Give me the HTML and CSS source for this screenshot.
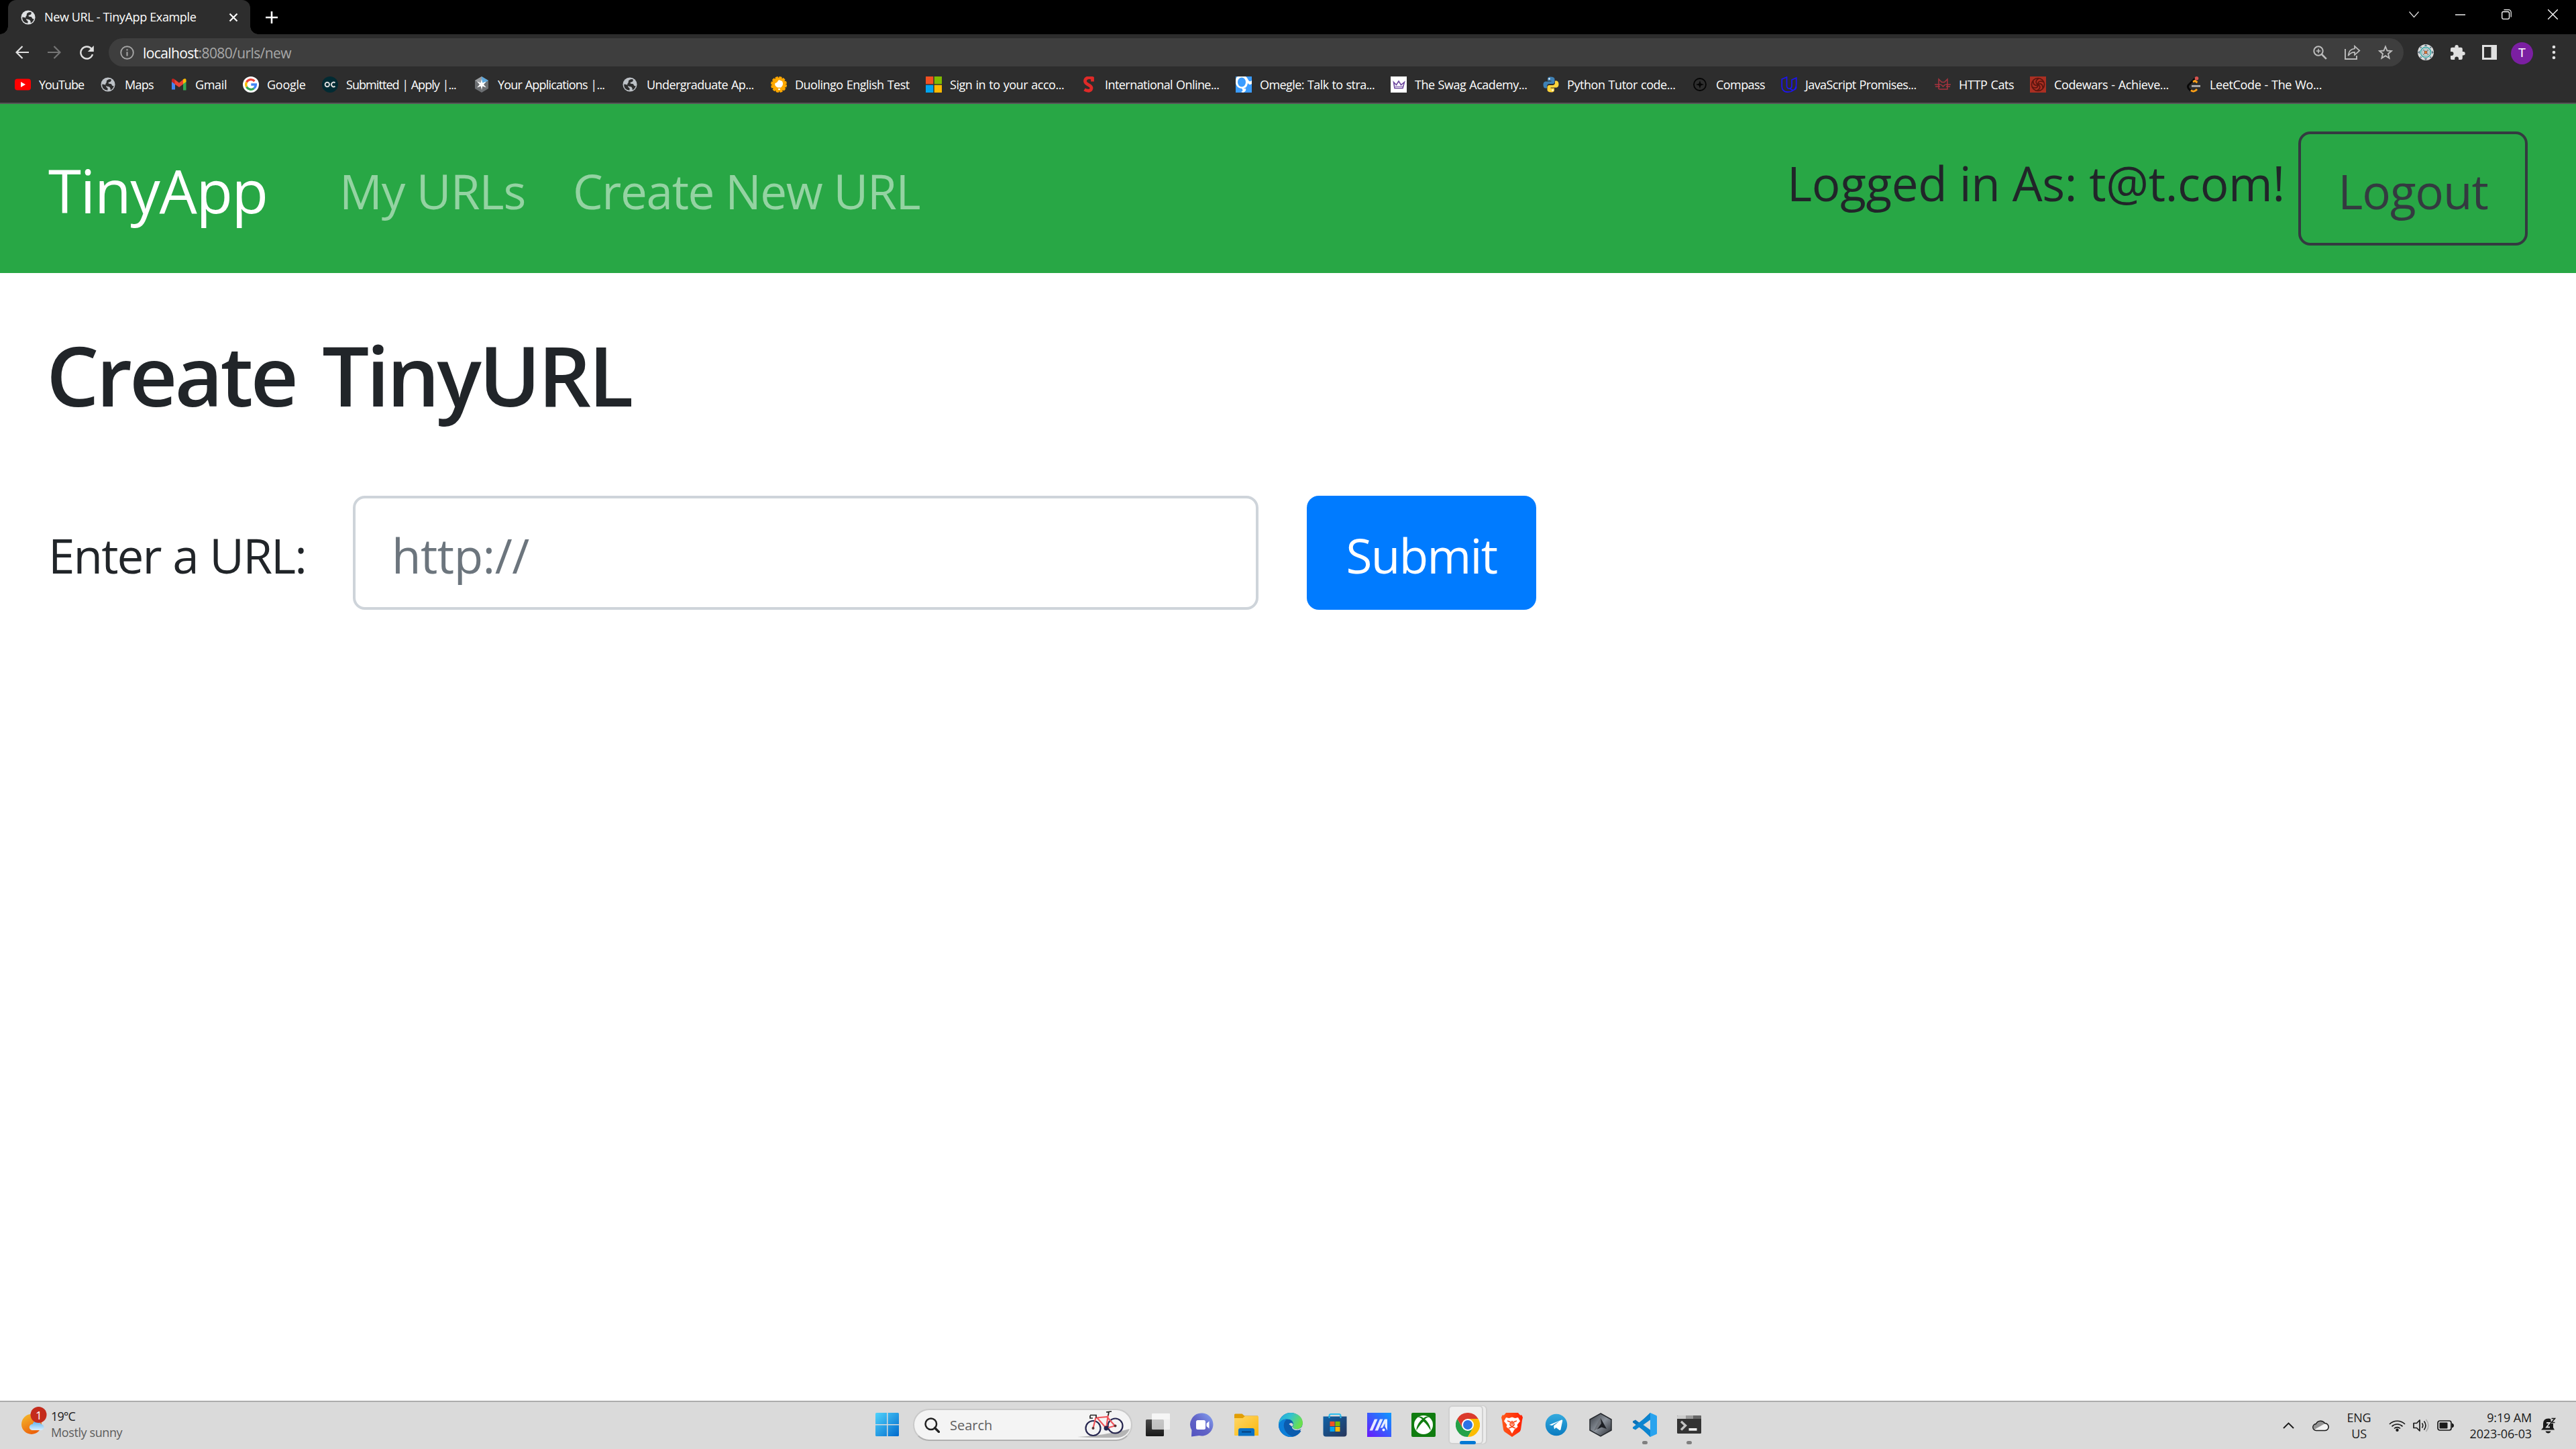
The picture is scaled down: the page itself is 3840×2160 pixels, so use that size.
FILE: index.html
```html
<!DOCTYPE html>
<html lang="en">
<head>
<meta charset="utf-8">
<title>New URL - TinyApp Example</title>
<link rel="stylesheet" href="styles.css">
</head>
<body>
<svg class="defs" width="0" height="0">
  <defs>
    <symbol id="globe" viewBox="0 0 24 24"><circle cx="12" cy="12" r="11.5" fill="currentColor"/><path d="M2.500 11.500c3 .5 4.500.5 6 1.800 1 1.200 0 2.700 1.500 3.700 1.500.8 2 1.500 1.200 4.500C5 21 1.800 16.500 2.500 11.500zM10 5.500c2-1.500 4-2.500 6.500-2 1.500 1 .5 3-.5 3.800-1.500 1-3.500.7-3.500 2.200.2 1.300 2.500 1 4 1.500 2.200.8 1.500 3.500 4 3.500l1-.4c-.5 3-3 6-5.500 6.900.5-2.500-.5-3.500-1.500-5-1-1.300-4.500-.5-6-2.200C7 12 8 10.500 9 9.500c1-1 .3-2.500 1-4z" fill="#2d2d2d"/></symbol>
    <linearGradient id="gStart" x1="0" y1="0" x2="1" y2="1"><stop offset="0" stop-color="#50d3fc"/><stop offset="1" stop-color="#0069cc"/></linearGradient>
    <linearGradient id="gSun" x1="0" y1="0" x2=".5" y2="1"><stop offset="0" stop-color="#f5bd2c"/><stop offset="1" stop-color="#ec620b"/></linearGradient>
    <linearGradient id="gCloud" x1="0" y1="0" x2="0" y2="1"><stop offset="0" stop-color="#58b0ee"/><stop offset="1" stop-color="#d9efff"/></linearGradient>
    <linearGradient id="gDark" x1="0" y1="0" x2="0" y2="1"><stop offset="0" stop-color="#4a4a4a"/><stop offset="1" stop-color="#191919"/></linearGradient>
    <linearGradient id="gChat" x1="0" y1="1" x2="1" y2="0"><stop offset="0" stop-color="#5252c0"/><stop offset=".5" stop-color="#6264c7"/><stop offset="1" stop-color="#87a6f5"/></linearGradient>
    <linearGradient id="gFolder" x1="0" y1="0" x2="1" y2="1"><stop offset="0" stop-color="#ffd766"/><stop offset="1" stop-color="#fbb70e"/></linearGradient>
    <linearGradient id="gEdge" x1="0" y1="0" x2="1" y2=".4"><stop offset="0" stop-color="#1ea5e0"/><stop offset=".5" stop-color="#33c2cf"/><stop offset="1" stop-color="#6bdf4e"/></linearGradient>
    <linearGradient id="gStore" x1="0" y1="0" x2="1" y2="1"><stop offset="0" stop-color="#0f62a8"/><stop offset="1" stop-color="#27355a"/></linearGradient>
    <linearGradient id="gArmoury" x1="0" y1="1" x2="1" y2="0"><stop offset="0" stop-color="#6a18fb"/><stop offset="1" stop-color="#0b9bff"/></linearGradient>
    <linearGradient id="gBrave" x1="0" y1="0" x2="1" y2="0"><stop offset="0" stop-color="#ff5a1c"/><stop offset="1" stop-color="#ff2104"/></linearGradient>
    <linearGradient id="gTg" x1="0" y1="0" x2="0" y2="1"><stop offset="0" stop-color="#34aade"/><stop offset="1" stop-color="#0a7bc0"/></linearGradient>
    <linearGradient id="gHex" x1="0" y1="0" x2="1" y2="1"><stop offset="0" stop-color="#34383f"/><stop offset=".5" stop-color="#8b929b"/><stop offset="1" stop-color="#23262c"/></linearGradient>
  </defs>
</svg>

<header class="chrome">
  <div class="tabstrip">
    <div class="tab">
      <svg class="favicon light" width="22" height="22"><use href="#globe"/></svg>
      <span class="tab-title">New URL - TinyApp Example</span>
      <svg class="tab-close" width="14" height="14" viewBox="0 0 14 14"><path d="M1.500 1.500l11 11M12.500 1.500l-11 11" stroke="#fff" stroke-width="2.200"/></svg>
    </div>
    <svg class="tab-new" width="18" height="18" viewBox="0 0 18 18"><path d="M9 0v18M0 9h18" stroke="#fff" stroke-width="2.600"/></svg>
    <div class="window-buttons">
      <svg width="15" height="10" viewBox="0 0 15 10"><path d="M.5.5l7 8 7-8" fill="none" stroke="#ddd" stroke-width="1.200"/></svg>
      <svg width="15" height="10" viewBox="0 0 15 10"><path d="M0 5h15" stroke="#fff" stroke-width="1.400"/></svg>
      <svg width="15" height="15" viewBox="0 0 15 15"><rect x=".7" y="3.500" width="10.800" height="10.800" rx="2" fill="none" stroke="#fff" stroke-width="1.300"/><path d="M3.500.7h7a3.700 3.700 0 0 1 3.700 3.700v7.100" fill="none" stroke="#fff" stroke-width="1.200"/></svg>
      <svg width="15" height="15" viewBox="0 0 15 15"><path d="M0 0l15 15M15 0L0 15" stroke="#fff" stroke-width="1.300"/></svg>
    </div>
  </div>

  <div class="toolbar">
    <svg width="20" height="20" viewBox="0 0 20 20"><path d="M20 10H2M10.500 1L1.500 10l9 9" fill="none" stroke="#e0e0e0" stroke-width="2.200"/></svg>
    <svg class="off" width="20" height="20" viewBox="0 0 20 20"><path d="M0 10h18M9.500 1l9 9-9 9" fill="none" stroke="#757575" stroke-width="2.200"/></svg>
    <svg width="21" height="21" viewBox="0 0 21 21"><path d="M17.500 5A9 9 0 1 0 19 13" fill="none" stroke="#e0e0e0" stroke-width="2.400"/><path d="M20.800 0v9h-9z" fill="#e0e0e0"/></svg>
    <div class="omnibox">
      <svg width="21" height="21" viewBox="0 0 21 21"><circle cx="10.500" cy="10.500" r="9.300" fill="none" stroke="#a6a6a6" stroke-width="1.900"/><path d="M10.500 9.200v6.300M10.500 5.200v2.200" stroke="#a6a6a6" stroke-width="2.100"/></svg>
      <span class="url"><b>localhost</b>:8080/urls/new</span>
      <div class="omni-actions">
        <svg width="21" height="21" viewBox="0 0 21 21"><circle cx="8" cy="8" r="6.700" fill="none" stroke="#bdbdbd" stroke-width="2"/><path d="M13 13l6.800 6.800" stroke="#bdbdbd" stroke-width="2.600"/><path d="M8 4.800v6.400M4.800 8h6.400" stroke="#bdbdbd" stroke-width="1.600"/></svg>
        <svg width="24" height="22" viewBox="0 0 24 22"><path d="M1 6v15h17v-5" fill="none" stroke="#bdbdbd" stroke-width="1.900"/><path d="M5.500 16C6 10 9.500 6 15 5.500V1.800l7.300 6.700-7.300 6.300v-4C11 10.800 8 12 5.500 16z" fill="none" stroke="#bdbdbd" stroke-width="1.700"/></svg>
        <svg width="22" height="22" viewBox="0 0 22 22"><path d="M11 2.500l2.500 6 6.500.5-5 4.200 1.600 6.400L11 16.100l-5.600 3.500L7 13.200 2 9l6.500-.5z" fill="none" stroke="#bdbdbd" stroke-width="1.900"/></svg>
      </div>
    </div>
    <div class="extensions">
      <svg width="24" height="24" viewBox="0 0 24 24"><circle cx="12" cy="12" r="12" fill="#dcdcdc"/><path d="M12 0l2.500 3h-5zM12 24l2.500-3h-5zM0 12l3-2.500v5zM24 12l-3-2.500v5zM3.500 3.500l3 .6-2.400 2.400zM20.500 3.500l-3 .6 2.400 2.400zM3.500 20.500l3-.6-2.400-2.400zM20.500 20.500l-3-.6 2.400-2.400z" fill="#5b7280"/><circle cx="12" cy="12" r="7.600" fill="none" stroke="#38a9a8" stroke-width="1.500"/><circle cx="12" cy="12" r="5.200" fill="none" stroke="#8aa" stroke-width="1"/><path d="M8 8l8 8M16 8l-8 8" stroke="#556"/><rect x="10" y="10" width="4" height="4" fill="#f0762c" stroke="#555" stroke-width=".8"/></svg>
      <svg width="22" height="22" viewBox="0 0 22 22"><path d="M19 10h-1.200V6a2.200 2.200 0 0 0-2.200-2.200H11.800V2.700a2.700 2.700 0 0 0-5.400 0v1.100H2.200A2.200 2.200 0 0 0 0 6v4h1.500a3 3 0 0 1 0 6H0v4a2 2 0 0 0 2.200 2h4v-1.600a2.900 2.900 0 0 1 5.800 0V22h3.600a2.200 2.200 0 0 0 2.200-2.200v-4.400H19A2.700 2.700 0 0 0 19 10z" fill="#e0e0e0"/></svg>
      <svg width="22" height="22" viewBox="0 0 22 22"><rect width="22" height="22" fill="#e0e0e0"/><rect x="3" y="3" width="10.500" height="16" fill="#2d2d2d"/></svg>
      <span class="avatar">T</span>
      <svg width="6" height="22" viewBox="0 0 6 22"><circle cx="3" cy="3" r="2.300" fill="#e0e0e0"/><circle cx="3" cy="11" r="2.300" fill="#e0e0e0"/><circle cx="3" cy="19" r="2.300" fill="#e0e0e0"/></svg>
    </div>
  </div>

  <nav class="bookmarks">
    <a class="bm"><svg width="24" height="24" viewBox="0 0 24 24"><rect y="3.500" width="24" height="17" rx="4" fill="#f00"/><path d="M9 8l7 4-7 4z" fill="#fff"/></svg><span>YouTube</span></a>
    <a class="bm"><svg class="favicon" width="24" height="24" viewBox="0 0 24 24"><use href="#globe" x="0" y="1" width="22" height="22"/></svg><span>Maps</span></a>
    <a class="bm"><svg width="24" height="24" viewBox="0 0 24 24"><path d="M1 6v13.500h5V11z" fill="#4285f4"/><path d="M18 11v9.500h4.500V6z" fill="#34a853"/><path d="M1 5c0-2 2.500-2.500 4-1l1 1v6.500L1 8z" fill="#c5221f"/><path d="M22.500 5c0-2-2.500-2.500-4-1l-1 1v6.500l5-3.500z" fill="#fbbc04"/><path d="M5.500 4.500L12 9.500l6-5v7l-6 4.500-6.500-4.500z" fill="#ea4335"/></svg><span>Gmail</span></a>
    <a class="bm"><svg width="24" height="24" viewBox="0 0 24 24"><circle cx="12" cy="12" r="12" fill="#fff"/><g fill="none" stroke-width="3.300"><path d="M17.500 7A7.400 7.400 0 0 0 5.600 8.500" stroke="#ea4335"/><path d="M5.600 8.500a7.400 7.400 0 0 0 0 7" stroke="#fbbc04"/><path d="M5.600 15.500a7.400 7.400 0 0 0 11 2.200" stroke="#34a853"/><path d="M16.600 17.700A7.400 7.400 0 0 0 19.400 12H12.300" stroke="#4285f4"/></g></svg><span>Google</span></a>
    <a class="bm"><svg width="24" height="24" viewBox="0 0 24 24"><circle cx="12" cy="12" r="12" fill="#022b33"/><circle cx="7.800" cy="12" r="3.200" fill="none" stroke="#ddd" stroke-width="1.900"/><path d="M19.500 9.500a3.300 3.300 0 1 0 0 5" fill="none" stroke="#ddd" stroke-width="1.900"/></svg><span>Submitted | Apply |...</span></a>
    <a class="bm"><svg width="24" height="24" viewBox="0 0 24 24"><path d="M12 0l10 6v12L12 24 2 18V6z" fill="#6c6f72"/><path d="M12 0l10 6-10 6z" fill="#5fa9dd"/><path d="M12 0v12L2 6z" fill="#9a9da0"/><path d="M12 4l1.300 5.500L19 7.500 15 12l4 4.500-5.700-2L12 20l-1.300-5.500-5.700 2L9 12 5 7.500l5.700 2z" fill="#fff"/></svg><span>Your Applications |...</span></a>
    <a class="bm"><svg class="favicon" width="24" height="24" viewBox="0 0 24 24"><use href="#globe" x="0" y="1" width="22" height="22"/></svg><span>Undergraduate Ap...</span></a>
    <a class="bm"><svg width="24" height="24" viewBox="0 0 24 24"><circle cx="12" cy="12" r="10.500" fill="#ffa800" stroke="#ffa800" stroke-width="3" stroke-dasharray="4 1.500"/><path d="M12 5l5 2c2 4 1 7-2 9.500h-4.500C7 15 5.500 13 6.500 10L9 9zM11 18h3v2h-3z" fill="#fff"/></svg><span>Duolingo English Test</span></a>
    <a class="bm"><svg width="24" height="24" viewBox="0 0 24 24"><path d="M0 0h11.300v11.300H0z" fill="#f25022"/><path d="M12.700 0H24v11.300H12.700z" fill="#7fba00"/><path d="M0 12.700h11.300V24H0z" fill="#00a4ef"/><path d="M12.700 12.700H24V24H12.700z" fill="#ffb900"/></svg><span>Sign in to your acco...</span></a>
    <a class="bm"><svg width="24" height="24" viewBox="0 0 24 24"><path d="M17.500 7.500V2.500C12 0 6.500 2.500 6.500 7c0 5.500 9.500 5 9.500 10 0 4.500-5 5.500-10.500 2.500" fill="none" stroke="#df2a28" stroke-width="4.800"/></svg><span>International Online...</span></a>
    <a class="bm"><svg width="24" height="24" viewBox="0 0 24 24"><path d="M0 0h24v24H0z" fill="#3b9cff"/><path d="M3 0h12c4 3 4 10 9 6v5c-3 2-4 1-6-1-1 6-4 8-8 8-5 0-9-3-10-8V6c0-3 1-5 3-6z" fill="#fff"/><ellipse cx="9" cy="8.500" rx="6" ry="7" fill="#3b9cff"/><path d="M9 18h6c1 3-1 5-4 6l-3-1c3-1 3-3 1-5z" fill="#fff"/></svg><span>Omegle: Talk to stra...</span></a>
    <a class="bm"><svg width="24" height="24" viewBox="0 0 24 24"><path d="M0 0h24v24H0z" fill="#fff"/><path d="M4.500 8.500l4 4L12 7l3.500 5.500 5-4-2.500 9H6z" fill="none" stroke="#6d479f" stroke-width="1.600"/><path d="M7 15h11" stroke="#9d7fc0" stroke-width="1.500"/></svg><span>The Swag Academy...</span></a>
    <a class="bm"><svg width="24" height="24" viewBox="0 0 24 24"><path d="M11.800.5C7 .5 7 2.500 7 4v2.500h5.500v1H4.300C1.500 7.500.5 10 .5 12.500c0 3 1.200 5 3.500 5h2v-3c0-2 1.500-3.500 3.500-3.500h5c1.700 0 3-1.300 3-3V4c0-2-2-3.500-5.700-3.500z" fill="#3f81b5"/><path d="M12.200 23.500c4.800 0 4.800-2 4.800-3.500v-2.500h-5.500v-1h8.200c2.800 0 3.800-2.500 3.800-5s-1.200-5-3.500-5h-2v3c0 2-1.500 3.500-3.500 3.500h-5c-1.700 0-3 1.300-3 3V20c0 2 2 3.500 5.700 3.500z" fill="#ffd43b"/><circle cx="9.500" cy="3.500" r="1.200" fill="#fff"/><circle cx="14.500" cy="20.500" r="1.200" fill="#fff"/></svg><span>Python Tutor code...</span></a>
    <a class="bm"><svg width="24" height="24" viewBox="0 0 24 24"><circle cx="12" cy="12" r="9" fill="none" stroke="#050505" stroke-width="1.800"/><path d="M12 6l1.500 4.500L18 12l-4.500 1.500L12 18l-1.500-4.500L6 12l4.500-1.500z" fill="#050505"/></svg><span>Compass</span></a>
    <a class="bm"><svg width="24" height="24" viewBox="0 0 24 24"><path d="M8.500 1L1.200 4v11c0 5 3.500 8.200 8 8.200 8 0 13.500-4 13.500-12V2L16 5v9c0 5-7.500 6-7.500 0zM14 19c5 3 8.700 0 8.700-4" fill="none" stroke="#1d14f5" stroke-width="1.700"/></svg><span>JavaScript Promises...</span></a>
    <a class="bm"><svg width="24" height="24" viewBox="0 0 24 24"><path d="M6 19V4l4.500 4.500h4L19 4v15H6.500M0 12h9M16 12h8M1 15h7M17 15h6M9.500 12l3 3 3-3" fill="none" stroke="#a8333f" stroke-width="1.500"/></svg><span>HTTP Cats</span></a>
    <a class="bm"><svg width="24" height="24" viewBox="0 0 24 24"><path d="M0 0h24v24H0z" fill="#ab2f22"/><g fill="none" stroke="#5c160f" stroke-width="1.700"><circle cx="12" cy="12" r="9.500"/><path id="cwArm" d="M12 12c-4-2-4-6 1-9"/><use href="#cwArm" transform="rotate(60 12 12)"/><use href="#cwArm" transform="rotate(120 12 12)"/><use href="#cwArm" transform="rotate(180 12 12)"/><use href="#cwArm" transform="rotate(240 12 12)"/><use href="#cwArm" transform="rotate(300 12 12)"/></g></svg><span>Codewars - Achieve...</span></a>
    <a class="bm"><svg width="24" height="24" viewBox="0 0 24 24"><path d="M14 3L4.500 12.500c-1.500 1.500-1 4 0 5.500L8 21.500" fill="none" stroke="#070707" stroke-width="2.800"/><path d="M11 8l3-1.500L17.500 9M8 20.500c3 3 6.500 1.500 9-1.500" fill="none" stroke="#ffa116" stroke-width="2.800"/><path d="M9 14.300h13" stroke="#b3b3b3" stroke-width="2.800"/><circle cx="16.500" cy="2.800" r="2.800" fill="#d9534f"/></svg><span>LeetCode - The Wo...</span></a>
  </nav>
</header>

<main class="page">
  <nav class="navbar">
    <a class="brand">TinyApp</a>
    <a class="nav-link nav-urls">My URLs</a>
    <a class="nav-link nav-create">Create New URL</a>
    <form class="session">
      <span class="who">Logged in As: t@t.com!</span>
      <button class="btn btn-outline" type="button">Logout</button>
    </form>
  </nav>
  <h3 class="title">Create TinyURL</h3>
  <form class="create-form">
    <label class="field-label" for="long-url">Enter a URL:</label>
    <input class="field" id="long-url" type="text" placeholder="http://">
    <button class="btn btn-primary" type="button">Submit</button>
  </form>
</main>

<footer class="taskbar">
  <div class="weather">
    <svg width="40" height="44" viewBox="0 0 40 44"><circle cx="15" cy="26" r="15" fill="url(#gSun)"/><path d="M16 35a4.500 4.500 0 0 1 .5-9 6.500 6.500 0 0 1 12.500 0 4.500 4.500 0 0 1 0 9z" fill="url(#gCloud)"/><circle cx="25.500" cy="12" r="12" fill="#c42b1c"/></svg>
    <span class="badge">1</span>
    <div class="weather-text"><span class="temp">19°C</span><span class="sky">Mostly sunny</span></div>
  </div>

  <div class="apps">
    <span class="app"><svg width="36" height="36" viewBox="0 0 36 36"><path d="M1.500 0H17v17H0V1.500A1.500 1.500 0 0 1 1.500 0zM18.500 0h15A1.500 1.500 0 0 1 35 1.500V17H18.500zM0 18.500h17V35H1.500A1.500 1.500 0 0 1 0 33.500zM18.500 18.500H35v15a1.500 1.500 0 0 1-1.500 1.500h-15z" fill="url(#gStart)"/></svg></span>
    <div class="search">
      <svg width="23" height="23" viewBox="0 0 23 23"><circle cx="9.800" cy="9.800" r="8.300" fill="none" stroke="#222" stroke-width="2.500"/><path d="M15.500 15.500l6 6" stroke="#222" stroke-width="3.200" stroke-linecap="round"/></svg>
      <span>Search</span>
      <svg class="bike" width="80" height="44" viewBox="0 0 80 44"><path d="M1 40c30-2 50-5 78-12-3 8-9 12-17 13-20 .5-40 .5-61-1z" fill="#b4b4b4"/><g fill="none" stroke="#26264f" stroke-width="2.200"><circle cx="24.500" cy="27" r="11"/><circle cx="57.500" cy="23.500" r="11"/></g><path d="M24.500 27l4-16M28.500 11.500l18-1.500L44 27l-14-16M47 7l-1 4 11 12.500L44 27" fill="none" stroke="#f0565c" stroke-width="2.200"/><path d="M20 8v4h4M20 7.500h9v4M44 3l8-1M48 2.500L47 8" fill="none" stroke="#222" stroke-width="1.700"/><circle cx="44" cy="27" r="3.400" fill="#26264f"/><circle cx="24.500" cy="27" r="2" fill="#5a3434"/><circle cx="57.500" cy="23.500" r="2" fill="#5a3434"/></svg>
    </div>
    <span class="app"><svg width="36" height="36" viewBox="0 0 36 36"><rect y="10" width="27" height="25" rx="1.500" fill="url(#gDark)"/><rect x="9" y="1" width="27" height="24" rx="1.500" fill="#f6f6f6" fill-opacity=".72"/><path d="M10 1h25a1 1 0 0 1 1 1v8H9V2a1 1 0 0 1 1-1z" fill="#fafafa" fill-opacity=".7"/></svg></span>
    <span class="app"><svg width="36" height="36" viewBox="0 0 36 36"><path d="M18.500.5a17 17 0 1 1-5 33.500L2 35.500 2.500 26A17 17 0 0 1 18.500.5z" fill="url(#gChat)"/><rect x="9" y="11" width="14" height="14" rx="2.500" fill="#fff"/><path d="M24.500 16l4-3.500v11l-4-3.500z" fill="#fff"/></svg></span>
    <span class="app"><svg width="36" height="36" viewBox="0 0 36 36"><path d="M1.500 1.500h10L15 4.500h20v10H0V3a1.500 1.500 0 0 1 1.500-1.500z" fill="#e19e06"/><path d="M0 8h12.500L16 5h19a1 1 0 0 1 1 1v28H1a1 1 0 0 1-1-1z" fill="url(#gFolder)"/><path d="M6 34.500V26a3 3 0 0 1 3-3h18a3 3 0 0 1 3 3v8.500z" fill="#0a70c4"/><path d="M11 28.500h14" stroke="#053f7c" stroke-width="2"/></svg></span>
    <span class="app"><svg width="36" height="36" viewBox="0 0 36 36"><circle cx="18" cy="18" r="18" fill="#0b5cae"/><path d="M0 18A18 18 0 0 1 18 0c10 0 18 6.500 18 15 0 6-4.500 9.500-9.500 9.500-4 0-6-1.500-6-3 0-1 1.500-1.500 1.500-4.500 0-4-3.500-7.500-9-7.500C7 9.500 2 12 0 18z" fill="url(#gEdge)"/><path d="M0 18c2-6 7-8.500 12.500-8.500C9 12 7 16 8 21.500 9.500 30 17 35 22 35.500A18 18 0 0 1 0 18z" fill="#0c7fd9"/><path d="M15.500 17c1.500-2.500 5-2.500 6 0 .3 2-1.500 3-1.500 4.500 0 2.500 3.500 4.500 7 4.500 3 0 5-1 7-2l2.500-1.500V15c0 6-4.500 9.500-9.500 9.500-4 0-6-1.500-6-3z" fill="#dadada"/><path d="M36.500 15v14l-4.500-2.500 2-3z" fill="#dadada"/></svg></span>
    <span class="app"><svg width="36" height="36" viewBox="0 0 36 36"><path d="M9.500 7V4.500A2.500 2.500 0 0 1 12 2h12a2.500 2.500 0 0 1 2.500 2.500V7" fill="none" stroke="#2bbdee" stroke-width="2"/><path d="M.5 5.500h35v26a4 4 0 0 1-4 4h-27a4 4 0 0 1-4-4z" fill="url(#gStore)"/><path d="M10.500 13h7v7h-7z" fill="#f25022"/><path d="M18.500 13h7v7h-7z" fill="#7fba00"/><path d="M10.500 21h7v7h-7z" fill="#00a4ef"/><path d="M18.500 21h7v7h-7z" fill="#ffb900"/><path d="M9.500 5.500v2.500M26.500 5.500v2.500" stroke="#2bbdee" stroke-width="2"/></svg></span>
    <span class="app"><svg width="36" height="36" viewBox="0 0 36 36"><path d="M0 0h36v36H0z" fill="url(#gArmoury)"/><path d="M3.500 26.500L11 9.500h4.500L8 26.500zM11.500 26.500L19 9.500h4.500L16 26.500zM19.500 22.500L26 9.500h4v17l-3.500-6v-5l-3.500 7z" fill="#fff" fill-opacity=".88"/><circle cx="24.500" cy="25.500" r="2" fill="#fff"/></svg></span>
    <span class="app"><svg width="36" height="36" viewBox="0 0 36 36"><rect width="36" height="36" rx="2" fill="#107c10"/><circle cx="18" cy="18" r="14" fill="#fff"/><path d="M9 6.500c3-2 6.500-.5 9 1.500 2.500-2 6-3.500 9-1.500-2.500-.5-5 1-7 3 5 4.500 9 11 8.500 17C25.500 21 21.500 16 18 13c-3.500 3-7.500 8-10.500 13.500C7 20.500 11 14 16 9.500c-2-2-4.500-3.500-7-3z" fill="#107c10"/></svg></span>
    <span class="app active"><svg width="36" height="36" viewBox="0 0 36 36"><path d="M2.400 9A18 18 0 0 0 18 36l8-13.500H10.200z" fill="#24a148"/><path d="M33.600 9A18 18 0 0 1 18 36l7.800-13.500L18 9z" fill="#fbbc04"/><path d="M2.400 9l7.800 13.500L18 9h15.600A18 18 0 0 0 2.400 9z" fill="#db3a2c"/><circle cx="18" cy="18" r="9" fill="#fff"/><circle cx="18" cy="18" r="7" fill="#2a72e5"/></svg></span>
    <span class="app"><svg width="36" height="36" viewBox="0 0 36 36"><path d="M9 0h18l3 3.500 2.500 0L34 7l-1 4-2 14q-.5 2-2 3.500L18 36 7 28.500Q5.500 27 5 25L3 11 2 7l1.500-3.500L6 3.500z" fill="url(#gBrave)"/><path d="M9 7l4.500 1L18 6.500 22.500 8 27 7l3 5.500-4.500 5.500 1 3-5 4-3.500 6-3.500-6-5-4 1-3L6 12.500z" fill="#fff"/><path d="M11 12l5 2-1 4 3 3 3-3-1-4 5-2M13 23l5-2 5 2M18 12v6" fill="none" stroke="#fb4a1b" stroke-width="1.800"/></svg></span>
    <span class="app"><svg width="36" height="36" viewBox="0 0 36 36"><circle cx="18" cy="18" r="16.200" fill="url(#gTg)"/><path d="M7.500 18L26 10.500q1.500-.5 1.200 1.500L24.500 25q-.5 1.500-2 .7l-5-3.700-2.500 2.500-1-5 9-7.500-11.500 7z" fill="#fff"/></svg></span>
    <span class="app"><svg width="36" height="36" viewBox="0 0 36 36"><path d="M18 1l16 9v16L18 35 2 26V10z" fill="url(#gHex)" stroke="#25282d" stroke-width="1.500"/><path d="M18 8l9 16-7.500-2.500L8 27z" fill="#1c1f24"/><path d="M18 8L8 27l4-1 7-10z" fill="#c2c8cf" fill-opacity=".5"/></svg></span>
    <span class="app running"><svg width="36" height="36" viewBox="0 0 36 36"><path d="M26 0L10 15 4 10.500 0 12.500v2L21 30l5 6z" fill="#0a72b8"/><path d="M26 36L10 21l-6 4.500L0 23.500v-2L22 5l4-5z" fill="#0b84cf"/><path d="M26 0l9 4q1 .5 1 1.500v25q0 1-1 1.500l-9 4z" fill="#29a3ee"/><path d="M26 10.500L15.500 18 26 25.500z" fill="#dadada"/></svg></span>
    <span class="app running"><svg width="36" height="36" viewBox="0 0 36 36"><rect y="4" width="36" height="27" rx="1.500" fill="#333"/><path d="M0 9V5.500A1.500 1.500 0 0 1 1.500 4H13v5z" fill="#ccc"/><path d="M13 4h11v5H13z" fill="#999"/><path d="M24 4h10.500A1.500 1.500 0 0 1 36 5.500V9H24z" fill="#666"/><path d="M6 13l6.500 6L6 25.500" fill="none" stroke="#c4c4c4" stroke-width="3.400"/><rect x="17.500" y="23" width="12" height="3.700" fill="#f0f0f0"/></svg></span>
  </div>

  <div class="tray">
    <svg width="17" height="10" viewBox="0 0 17 10"><path d="M1 9l7.500-7.500L16 9" fill="none" stroke="#1a1a1a" stroke-width="1.900"/></svg>
    <svg class="t-cloud" width="25" height="18" viewBox="0 0 25 18"><path d="M6 16.500A5 5 0 0 1 5.500 6.500 7.500 7.500 0 0 1 18.500 5.500a5.500 5.500 0 0 1 .5 11z" fill="#949494"/><path d="M3 15l15-8.500c6 0 7.500 8.500.5 10H6z" fill="#f4f4f4"/><path d="M6 16.500A5 5 0 0 1 5.500 6.500 7.500 7.500 0 0 1 18.500 5.500a5.500 5.500 0 0 1 .5 11z" fill="none" stroke="#1a1a1a" stroke-width="1.400"/></svg>
    <div class="lang"><span>ENG</span><span>US</span></div>
    <svg class="t-wifi" width="25" height="18" viewBox="0 0 25 18"><path d="M1 7a16.300 16.300 0 0 1 23 0M4.500 10.300a11.300 11.300 0 0 1 16 0M8 13.500a6.500 6.500 0 0 1 9 0" fill="none" stroke="#1a1a1a" stroke-width="1.700"/><circle cx="12.500" cy="15.700" r="2.200" fill="#1a1a1a"/></svg>
    <svg class="t-sound" width="25" height="20" viewBox="0 0 25 20"><path d="M1 6.500h4.500L10 2v16l-4.500-4.500H1z" fill="none" stroke="#1a1a1a" stroke-width="1.700" stroke-linejoin="round"/><path d="M13.500 6.500q2.500 3.500 0 7M16.500 3.500q5 6.500 0 13" fill="none" stroke="#1a1a1a" stroke-width="1.600"/><path d="M19.500 1q7 9 0 18" fill="none" stroke="#aaa" stroke-width="1.500"/></svg>
    <svg class="t-battery" width="25" height="16" viewBox="0 0 25 16"><rect x="1" y="1" width="20" height="14" rx="3" fill="none" stroke="#1a1a1a" stroke-width="1.700"/><rect x="3.500" y="3.500" width="12" height="9" rx="1" fill="#1a1a1a"/><path d="M22.500 5q2 .5 2 3t-2 3z" fill="#1a1a1a" stroke="#1a1a1a"/></svg>
    <div class="clock"><span>9:19 AM</span><span>2023-06-03</span></div>
    <svg class="t-bell" width="22" height="24" viewBox="0 0 22 24"><path d="M3 15V9.500Q3 1.500 11 1.500q7 0 7 8V15l2 3.500H0z" fill="#1a1a1a"/><path d="M6.500 20.500h8q-1 3-4 3t-4-3z" fill="#1a1a1a"/><path d="M8 8h5l-5 6.500h5" fill="none" stroke="#dadada" stroke-width="1.800"/><path d="M14 0h8v9h-7z" fill="#dadada"/><path d="M15.500 1.500h5l-5 6h5" fill="none" stroke="#1a1a1a" stroke-width="1.700"/></svg>
  </div>
</footer>
</body>
</html>
```
FILE: styles.css
```css
* { box-sizing: border-box; }
html, body { height: 100%; }
body {
  margin: 0;
  display: flex;
  flex-direction: column;
  background: #fff;
  color: #212529;
  font-family: "Open Sans", "Noto Sans", sans-serif;
  overflow: hidden;
}
svg { display: block; flex: none; }
.defs { position: absolute; }

/* Browser frame */
.chrome {
  flex: none;
  height: 155px;
  background: #2d2d2d;
  border-bottom: 2px solid #565656;
  color: #fff;
  font-size: 18px;
}
.tabstrip {
  height: 51px;
  background: #000;
  display: flex;
  align-items: center;
  padding-left: 12px;
}
.tab {
  position: relative;
  width: 361px;
  height: 51px;
  padding: 0 18px 0 19px;
  display: flex;
  align-items: center;
  background: #2d2d2d;
  border-radius: 12px 12px 0 0;
}
.tab::before, .tab::after {
  content: "";
  position: absolute;
  bottom: 0;
  width: 12px;
  height: 12px;
}
.tab::before { left: -12px; background: radial-gradient(circle at 0 0, #000 11.5px, #2d2d2d 12px); }
.tab::after { right: -12px; background: radial-gradient(circle at 100% 0, #000 11.5px, #2d2d2d 12px); }
.favicon { color: #bdc1c6; }
.favicon.light { color: #dfe1e3; }
.tab-title { margin-left: 13px; padding-bottom: 1px; letter-spacing: -.36px; white-space: nowrap; flex: 1; }
.tab-new { margin-left: 23px; }
.window-buttons {
  margin-left: auto;
  padding: 0 27px 8px 0;
  display: flex;
  align-items: center;
  gap: 54px;
}

.toolbar {
  height: 54px;
  padding: 0 30px 0 23px;
  display: flex;
  align-items: center;
}
.toolbar > .off { margin: 0 28px; }
.omnibox {
  flex: 1;
  height: 42px;
  margin-left: 22px;
  padding: 0 16px 0 17px;
  border-radius: 21px;
  background: #3e3e3e;
  display: flex;
  align-items: center;
}
.url { margin-left: 13px; padding-top: 1px; font-size: 21px; letter-spacing: -.6px; color: #a8a8a8; }
.url b { font-weight: 400; color: #fff; }
.omni-actions { margin-left: auto; display: flex; align-items: center; gap: 26px; }
.extensions { margin-left: 21px; display: flex; align-items: center; gap: 25px; }
.avatar {
  width: 33px;
  height: 33px;
  margin: 2px 2px 0 -4px;
  border-radius: 50%;
  background: #7b1fa2;
  text-align: center;
  font: 19px/32px Roboto, sans-serif;
}
.avatar + svg { margin-left: 1px; }

.bookmarks { display: flex; align-items: center; height: 42px; padding-left: 22px; }
.bm {
  display: flex;
  align-items: center;
  gap: 12px;
  flex: none;
  width: 231px;
  white-space: nowrap;
  letter-spacing: -.56px;
  word-spacing: .8px;
}
.bm:nth-child(1) { width: 128px; letter-spacing: -1px; }
.bm:nth-child(2) { width: 105px; letter-spacing: -.73px; }
.bm:nth-child(3) { width: 107px; letter-spacing: -.32px; }
.bm:nth-child(4) { width: 118px; letter-spacing: -.25px; }
.bm:nth-child(5) { width: 226px; letter-spacing: -.94px; }
.bm:nth-child(6) { width: 222px; letter-spacing: -.8px; }
.bm:nth-child(7) { width: 221px; }
.bm:nth-child(8) { letter-spacing: -.5px; }
.bm:nth-child(9) { letter-spacing: -.44px; }
.bm:nth-child(12) { width: 227px; letter-spacing: -.48px; }
.bm:nth-child(13) { width: 222px; letter-spacing: -.44px; }
.bm:nth-child(14) { width: 133px; }
.bm:nth-child(15) { width: 229px; letter-spacing: -.6px; }
.bm:nth-child(16) { width: 142px; letter-spacing: -.38px; }
.bm:nth-child(17) { width: 232px; letter-spacing: -.38px; }
.bm:nth-child(18) { letter-spacing: -.36px; }

/* Page */
.page { flex: 1; font-size: 71px; line-height: 108px; }
.navbar {
  height: 252px;
  padding: 0 72px;
  display: flex;
  align-items: center;
  background: #28a745;
}
.brand { width: 437px; padding-top: 4px; font-size: 89px; line-height: 135px; letter-spacing: -1.3px; color: #fff; }
.nav-link { padding-top: 7px; color: rgba(255, 255, 255, .5); }
.nav-urls { width: 348px; margin-left: -3px; letter-spacing: -1px; }
.nav-create { letter-spacing: -1.35px; }
.session { margin-left: auto; display: flex; align-items: center; }
.who { margin: 0 20px 17px 0; letter-spacing: -.3px; }
.btn {
  height: 170px;
  width: 342px;
  padding: 7px 0 0;
  border: 4px solid transparent;
  border-radius: 18px;
  background: none;
  font: inherit;
  text-align: center;
}
.btn-outline { color: #343a40; border-color: #343a40; letter-spacing: -1.1px; }
.btn-primary { color: #fff; background: #007bff; letter-spacing: -1.65px; margin-left: 72px; }
.title {
  margin: 75px 69px 0;
  font-size: 124px;
  line-height: 152px;
  font-weight: 600;
  letter-spacing: -4px;
  word-spacing: 11px;
}
.create-form { margin: 105px 72px 0; display: flex; align-items: center; }
.field-label { width: 454px; padding-top: 7px; letter-spacing: -1.9px; word-spacing: 1px; }
.field {
  width: 1350px;
  height: 170px;
  padding: 6px 54px 0;
  border: 4px solid #ced4da;
  border-radius: 18px;
  font: inherit;
  letter-spacing: -.5px;
  background: #fff;
  outline: 0;
}
.field::placeholder { color: #6c757d; opacity: 1; }

/* Taskbar */
.taskbar {
  flex: none;
  height: 72px;
  display: grid;
  grid-template-columns: 1289.5px auto 1fr;
  background: #dadada;
  border-top: 2px solid #acacac;
  color: #1a1a1a;
  font-size: 18px;
  line-height: 24px;
}
.weather { position: relative; display: flex; padding: 7px 0 0 32px; }
.badge { position: absolute; left: 53px; top: 8px; color: #fff; font-size: 17px; }
.weather-text { margin: 2px 0 0 4px; display: flex; flex-direction: column; }
.temp { letter-spacing: -.9px; }
.sky { letter-spacing: -.4px; color: #5c5c5c; }
.apps { display: flex; align-items: center; height: 70px; }
.app {
  position: relative;
  width: 66px;
  height: 70px;
  display: flex;
  align-items: center;
  justify-content: center;
  padding-bottom: 2px;
}
.search {
  width: 327px;
  height: 48px;
  margin: 0 5px 2px 5.5px;
  padding: 0 1px 0 15px;
  display: flex;
  align-items: center;
  border: 2px solid #c9c9c9;
  border-bottom-color: #b0b0b0;
  border-radius: 24px;
  background: #f4f4f4;
  color: #606060;
  font-size: 20px;
}
.search span { margin-left: 15px; padding-top: 2px; flex: 1; }
.active::before {
  content: "";
  position: absolute;
  inset: 5px 10px 7px 4px;
  border: 2px solid #d0d0d0;
  border-radius: 6px;
  background: #eee;
  box-shadow: 5px 0 0 -1px #ececec, 6px 0 0 0 #cfcfcf;
}
.active svg { position: relative; }
.active::after, .running::after {
  content: "";
  position: absolute;
  bottom: 7px;
  left: 50%;
  width: 8px;
  height: 5px;
  margin-left: -4px;
  border-radius: 3px;
  background: #7f7f7f;
}
.active::after { width: 24px; margin-left: -12px; background: #0078d4; }

.tray { display: flex; align-items: center; justify-content: flex-end; height: 69px; padding-right: 30px; }
.t-cloud { margin-left: 27px; }
.lang { margin-left: 26px; width: 37px; display: flex; flex-direction: column; align-items: center; letter-spacing: -.2px; }
.t-wifi { margin-left: 26px; }
.t-sound { margin-left: 11px; }
.t-battery { margin-left: 11px; }
.clock { width: 116px; display: flex; flex-direction: column; align-items: flex-end; letter-spacing: -.15px; }
.t-bell { margin-left: 14px; }
```
